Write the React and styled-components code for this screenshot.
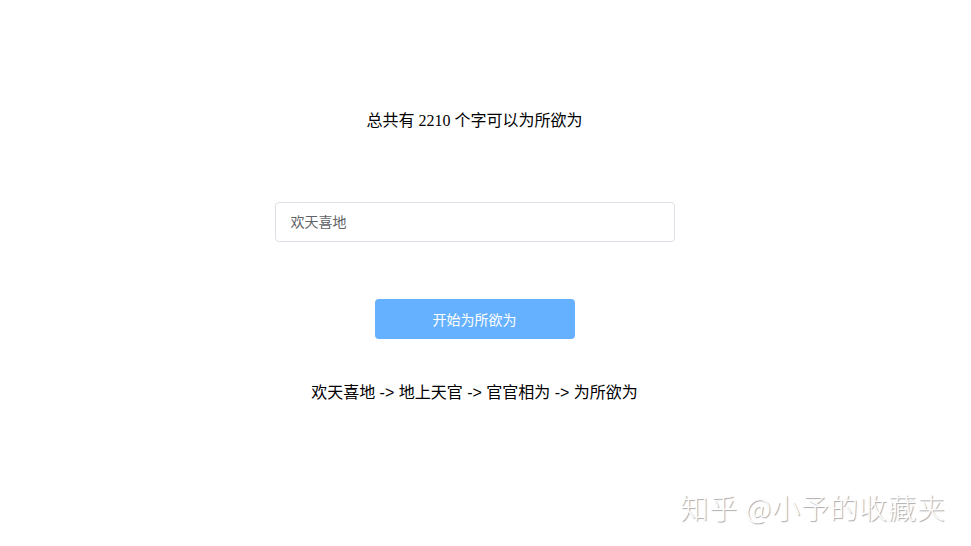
import React, { useState } from 'react';
import styled, { createGlobalStyle } from 'styled-components';

const GlobalStyle = createGlobalStyle`
  html, body {
    margin: 0;
    padding: 0;
    background: #fff;
  }
  body {
    font-family: "Liberation Sans", "Noto Sans CJK SC", sans-serif;
    color: #000;
  }
`;

const Page = styled.div`
  position: relative;
  width: 949px;
  height: 546px;
  padding-top: 109px;
  box-sizing: border-box;
  display: flex;
  flex-direction: column;
  align-items: center;
`;

const Title = styled.div`
  font-family: "Liberation Serif", "Noto Sans CJK SC", serif;
  font-size: 16px;
  line-height: 24px;
  color: #000;
`;

const Input = styled.input`
  margin-top: 69px;
  width: 400px;
  height: 40px;
  box-sizing: border-box;
  border: 1px solid #dcdfe6;
  border-radius: 4px;
  padding: 0 15px;
  font-family: "Liberation Sans", "Noto Sans CJK SC", sans-serif;
  font-size: 14px;
  color: #606266;
  outline: none;
  &::placeholder {
    color: #606266;
  }
`;

const StartButton = styled.button`
  margin-top: 57px;
  width: 200px;
  height: 40px;
  border: none;
  border-radius: 4px;
  background: #66b1ff;
  color: #fff;
  font-family: "Liberation Sans", "Noto Sans CJK SC", sans-serif;
  font-size: 14px;
  cursor: pointer;
`;

const Chain = styled.div`
  margin-top: 42px;
  font-size: 16px;
  line-height: 24px;
  color: #000;
`;

const Watermark = styled.div`
  position: absolute;
  right: 3px;
  top: 489px;
  font-family: "Noto Sans CJK SC", sans-serif;
  font-size: 28px;
  font-weight: 300;
  line-height: 36px;
  color: #fff;
  letter-spacing: 1px;
  text-shadow: 1px 1px 1px #a8a8a8;
`;

const App = () => {
  const [word, setWord] = useState('');

  return (
    <>
      <GlobalStyle />
      <Page>
        <Title>总共有 2210 个字可以为所欲为</Title>
        <Input
          placeholder="欢天喜地"
          value={word}
          onChange={(e) => setWord(e.target.value)}
        />
        <StartButton>开始为所欲为</StartButton>
        <Chain>欢天喜地 -&gt; 地上天官 -&gt; 官官相为 -&gt; 为所欲为</Chain>
        <Watermark>知乎 @小予的收藏夹</Watermark>
      </Page>
    </>
  );
};

export default App;
